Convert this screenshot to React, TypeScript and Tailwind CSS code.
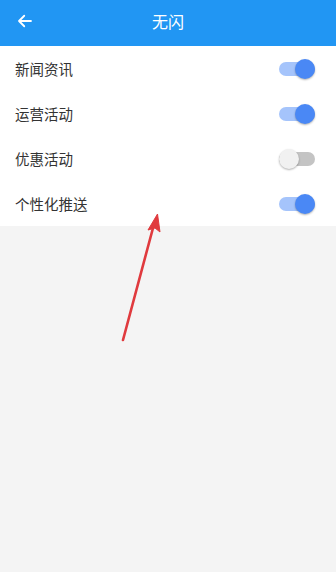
import { useState } from 'react';

type Item = { id: string; label: string; on: boolean };

const initial: Item[] = [
  { id: 'news', label: '新闻资讯', on: true },
  { id: 'ops', label: '运营活动', on: true },
  { id: 'promo', label: '优惠活动', on: false },
  { id: 'push', label: '个性化推送', on: true },
];

function Toggle({ on, onClick }: { on: boolean; onClick: () => void }) {
  return (
    <button
      type="button"
      onClick={onClick}
      className="relative flex h-5 w-[36px] items-center"
    >
      <span
        className={`h-[14px] w-full rounded-full ${on ? 'bg-[#a5c4fb]' : 'bg-[#c4c4c4]'}`}
      />
      <span
        className={`absolute top-0 h-5 w-5 rounded-full shadow-[0_1px_2px_rgba(0,0,0,0.3)] ${
          on ? 'right-0 bg-[#4a88f5]' : 'left-0 bg-[#f1f1f1]'
        }`}
      />
    </button>
  );
}

export default function App() {
  const [items, setItems] = useState(initial);

  return (
    <div
      className="relative flex h-[572px] w-[336px] flex-col bg-[#f4f4f4]"
      style={{ fontFamily: '"Noto Sans CJK SC", "Noto Sans", sans-serif' }}
    >
      <header className="flex h-[46px] items-center bg-[#2196f3] px-[16px] pb-[4px] text-white">
        <svg width="18" height="18" viewBox="0 0 24 24" fill="none" stroke="white" strokeWidth="2.4" strokeLinecap="round" strokeLinejoin="round">
          <path d="M20 12H4M11 5l-7 7 7 7" />
        </svg>
        <h1 className="flex-1 pr-[18px] text-center text-[16px]">无闪</h1>
      </header>

      <ul className="bg-white">
        {items.map((item) => (
          <li key={item.id} className="flex h-[45px] items-center justify-between pl-[15px] pr-[21px]">
            <span className="text-[14.5px] text-[#333]">{item.label}</span>
            <Toggle
              on={item.on}
              onClick={() =>
                setItems(items.map((i) => (i.id === item.id ? { ...i, on: !i.on } : i)))
              }
            />
          </li>
        ))}
      </ul>

      <svg className="pointer-events-none absolute left-0 top-0" width="336" height="572">
        <line x1="123" y1="340" x2="153" y2="228" stroke="#e03a3e" strokeWidth="2.6" strokeLinecap="round" />
        <path d="M157.5 214 L148 230 L155 228 L160 232 Z" fill="#e03a3e" stroke="#e03a3e" strokeWidth="1" strokeLinejoin="round" />
      </svg>
    </div>
  );
}
